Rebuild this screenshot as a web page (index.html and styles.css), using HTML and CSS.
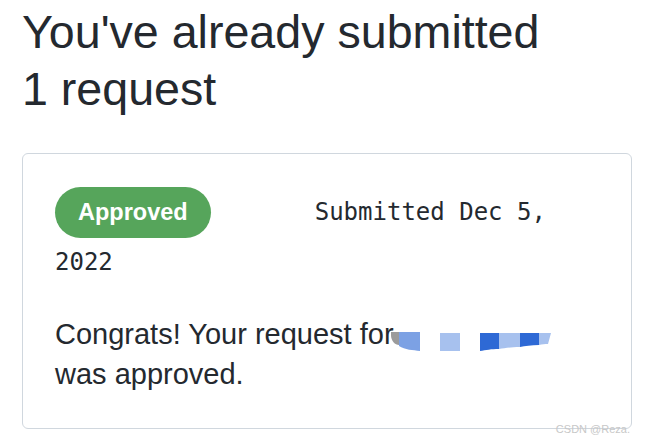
FILE: index.html
```html
<!DOCTYPE html>
<html lang="en">
<head>
    <meta charset="UTF-8">
    <meta name="viewport" content="width=device-width, initial-scale=1.0">
    <title>Requests</title>
    <link rel="stylesheet" href="styles.css">
</head>
<body>
    <h1 class="title">You've already submitted<br>1 request</h1>

    <div class="request-card">
        <p class="request-meta"><span class="badge">Approved</span><span>Submitted Dec 5,</span> <span>2022</span></p>
        <p class="request-text">Congrats! Your request for<span class="redacted"><svg width="160" height="20" viewBox="0 0 160 20">
            <path d="M0 0 H10 V13 H8 C4 13 0 9 0 3 Z" fill="#9b9b9b"/>
            <path d="M8 0 H29 V19 C22 18 14 18 8 14 Z" fill="#7ca1e4"/>
            <rect x="49" y="1" width="20" height="18" fill="#a7c1ee"/>
            <path d="M89 1 H108 V17 C100 17 95 18 89 19 Z" fill="#2e69d5"/>
            <path d="M108 1 H129 V15 C120 15 114 16 108 17 Z" fill="#a7c1ee"/>
            <path d="M129 1 H148 V13 C140 13 134 14 129 15 Z" fill="#2e69d5"/>
            <path d="M148 1 H160 L157 12 C154 12 151 12 148 13 Z" fill="#a7c1ee"/>
        </svg></span><br>was approved.</p>
    </div>

    <div class="watermark">CSDN @Reza.</div>
</body>
</html>
```

FILE: styles.css
```css
body {
    margin: 0;
    padding: 0 22px;
    font-family: "Liberation Sans", Arial, sans-serif;
    color: #24292f;
    background: #fff;
    position: relative;
    height: 444px;
}

.title {
    margin: 4px 0 35px;
    font-size: 46.6px;
    font-weight: normal;
    line-height: 57px;
}

.request-card {
    width: 544px;
    padding: 33px 32px 34px;
    border: 1px solid #d0d7de;
    border-radius: 6px;
}

.request-meta {
    margin: 0;
    font-family: "DejaVu Sans Mono", monospace;
    font-size: 24px;
    line-height: 48px;
}

.badge {
    display: inline-block;
    padding: 0 23px;
    margin-right: 104px;
    line-height: 51px;
    border-radius: 26px;
    background: #56a55b;
    color: #fff;
    font-family: "Liberation Sans", Arial, sans-serif;
    font-size: 23.5px;
    font-weight: bold;
}

.request-text {
    margin: 28px 0 0;
    font-size: 29px;
    line-height: 40px;
}

.redacted svg {
    display: inline-block;
    vertical-align: -8px;
    margin-left: -3px;
}

.watermark {
    position: absolute;
    right: 16px;
    bottom: 9px;
    font-size: 11px;
    color: #c8c8c8;
}
```
